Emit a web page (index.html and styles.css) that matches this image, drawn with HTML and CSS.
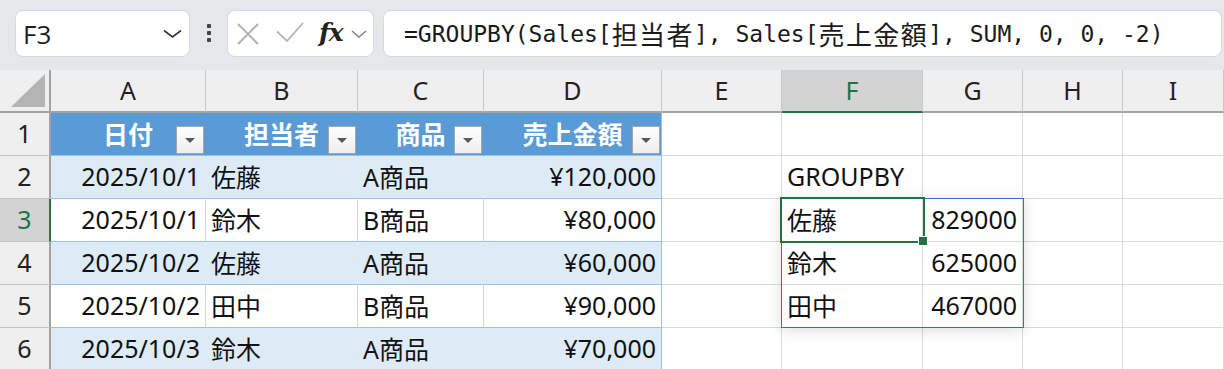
FILE: index.html
```html
<!DOCTYPE html>
<html lang="ja">
<head>
<meta charset="utf-8">
<title>GROUPBY</title>
<link rel="stylesheet" href="styles.css">
</head>
<body>
<div class="app">
  <div class="toolbar">
    <div class="namebox">
      <span class="name">F3</span>
      <svg class="chev" width="20" height="10" viewBox="0 0 20 10"><polyline points="1,1.5 9.5,8 18,1.5" fill="none" stroke="#333" stroke-width="1.6"/></svg>
    </div>
    <div class="dots">
      <svg width="8" height="20" viewBox="0 0 8 20"><rect x="2" y="1" width="4" height="4" rx="0.8" fill="#444"/><rect x="2" y="8" width="4" height="4" rx="0.8" fill="#444"/><rect x="2" y="15" width="4" height="4" rx="0.8" fill="#444"/></svg>
    </div>
    <div class="fxbox">
      <svg class="ic-x" width="22" height="22" viewBox="0 0 22 22"><path d="M1 1 L21 21 M21 1 L1 21" stroke="#b4b4b4" stroke-width="2" fill="none"/></svg>
      <svg class="ic-check" width="28" height="22" viewBox="0 0 28 22"><polyline points="1,9.5 11,19 27,1" fill="none" stroke="#b4b4b4" stroke-width="1.8"/></svg>
      <span class="fx">fx</span>
      <svg class="chev-s" width="16" height="8" viewBox="0 0 16 8"><polyline points="1,1 8,7 15,1" fill="none" stroke="#808080" stroke-width="1.4"/></svg>
    </div>
    <div class="formula">=GROUPBY(Sales[<span class="cjk">担当者</span>], Sales[<span class="cjk">売上金額</span>], SUM, 0, 0, -2)</div>
  </div>

  <div class="sheet">
    <div class="grid">
      <div class="ch corner"><svg width="36" height="35" viewBox="0 0 36 35"><polygon points="1,34 35,34 35,1" fill="#b4b4b4"/></svg></div>
      <div class="ch">A</div>
      <div class="ch">B</div>
      <div class="ch">C</div>
      <div class="ch">D</div>
      <div class="ch">E</div>
      <div class="ch sel">F</div>
      <div class="ch">G</div>
      <div class="ch">H</div>
      <div class="ch">I</div>

      <div class="rh">1</div>
      <div class="th"><span class="tt">日付</span><span class="fb"></span></div>
      <div class="th"><span class="tt">担当者</span><span class="fb"></span></div>
      <div class="th"><span class="tt">商品</span><span class="fb"></span></div>
      <div class="th last"><span class="tt">売上金額</span><span class="fb"></span></div>
      <div class="c"></div><div class="c"></div><div class="c"></div><div class="c"></div><div class="c"></div>

      <div class="rh">2</div>
      <div class="band r">2025/10/1</div>
      <div class="band l">佐藤</div>
      <div class="band l">A商品</div>
      <div class="band last r">¥120,000</div>
      <div class="c"></div><div class="c l">GROUPBY</div><div class="c"></div><div class="c"></div><div class="c"></div>

      <div class="rh sel">3</div>
      <div class="plain r">2025/10/1</div>
      <div class="plain l">鈴木</div>
      <div class="plain l">B商品</div>
      <div class="plain last r">¥80,000</div>
      <div class="c"></div><div class="c l">佐藤</div><div class="c r">829000</div><div class="c"></div><div class="c"></div>

      <div class="rh">4</div>
      <div class="band r">2025/10/2</div>
      <div class="band l">佐藤</div>
      <div class="band l">A商品</div>
      <div class="band last r">¥60,000</div>
      <div class="c"></div><div class="c l">鈴木</div><div class="c r">625000</div><div class="c"></div><div class="c"></div>

      <div class="rh">5</div>
      <div class="plain r">2025/10/2</div>
      <div class="plain l">田中</div>
      <div class="plain l">B商品</div>
      <div class="plain last r">¥90,000</div>
      <div class="c"></div><div class="c l">田中</div><div class="c r">467000</div><div class="c"></div><div class="c"></div>

      <div class="rh">6</div>
      <div class="band r">2025/10/3</div>
      <div class="band l">鈴木</div>
      <div class="band l">A商品</div>
      <div class="band last r">¥70,000</div>
      <div class="c"></div><div class="c"></div><div class="c"></div><div class="c"></div><div class="c"></div>
    </div>
    <div class="spill"></div>
    <div class="active"><span class="handle"></span></div>
  </div>
</div>
</body>
</html>
```

FILE: styles.css
```css
* { box-sizing: border-box; }
html, body { margin: 0; padding: 0; }
body {
  width: 1224px;
  height: 369px;
  overflow: hidden;
  background: #ffffff;
}
.app { width: 1224px; }

/* ---------- toolbar ---------- */
.toolbar {
  height: 70px;
  background: #e6e7ea;
  display: flex;
  align-items: flex-start;
  padding: 10px 0 0 15px;
}
.namebox, .fxbox, .formula {
  height: 47px;
  background: #ffffff;
  border: 1px solid #d8d9dc;
  border-radius: 8px;
}
.namebox {
  width: 175px;
  display: flex;
  align-items: center;
  justify-content: space-between;
  padding: 0 6px 0 7px;
}
.name {
  font-family: "Open Sans", "Noto Sans", sans-serif;
  font-weight: 400;
  font-size: 26px;
  color: #1e1e1e;
}
.chev { margin-top: 1px; }
.dots {
  width: 37px;
  height: 47px;
  display: flex;
  align-items: center;
  justify-content: center;
  padding-bottom: 1px;
}
.fxbox {
  width: 147px;
  display: flex;
  align-items: center;
  padding: 0 0 0 9px;
}
.ic-x { margin-right: 17px; }
.ic-check { margin-right: 15px; margin-top: -1px; }
.fx {
  font-family: "DejaVu Serif", "Liberation Serif", serif;
  font-style: italic;
  font-weight: bold;
  font-size: 25px;
  color: #222;
  margin-right: 8px;
  margin-top: -2px;
  letter-spacing: -1px;
}
.formula {
  margin-left: 9px;
  width: 839px;
  display: flex;
  align-items: center;
  padding-left: 20px;
  font-family: "DejaVu Sans Mono", "Liberation Mono", "Noto Sans CJK JP", monospace;
  font-size: 23px;
  color: #1a1a1a;
  white-space: pre;
}
.cjk {
  font-family: "Noto Sans CJK JP", sans-serif;
  font-size: 26px;
  letter-spacing: 1.4px;
}

/* ---------- sheet ---------- */
.sheet {
  position: relative;
  height: 299px;
  overflow: hidden;
}
.grid {
  display: grid;
  grid-template-columns: 51px 155px 152px 126px 178px 120px 141px 100px 100px 101px;
  grid-template-rows: repeat(7, 43px);
  font-family: "Noto Sans", "Noto Sans CJK JP", sans-serif;
  font-size: 25px;
  color: #111;
}
.grid > div {
  display: flex;
  align-items: center;
  padding-bottom: 3px;
  border-right: 1px solid #dadada;
  border-bottom: 1px solid #dadada;
  white-space: nowrap;
  overflow: hidden;
}
.r { justify-content: flex-end; padding-right: 5px; }
.l { justify-content: flex-start; padding-left: 5px; }

.grid > .ch {
  background: #efefef;
  justify-content: center;
  border-right: 1px solid #c8c8c8;
  border-bottom: 2px solid #a3a3a3;
  color: #222;
  padding-bottom: 2px;
}
.grid > .ch.sel {
  background: #d3d3d3;
  color: #217346;
  border-bottom: 2px solid #217346;
}
.grid > .corner {
  border-right: 2px solid #a3a3a3;
  align-items: flex-end;
  justify-content: flex-end;
  padding: 0 3px 3px 0;
}
.corner svg { display: block; }

.grid > .rh {
  background: #efefef;
  justify-content: center;
  border-right: 2px solid #a3a3a3;
  border-bottom: 1px solid #c4c4c4;
  color: #222;
}
.grid > .rh.sel {
  background: #d3d3d3;
  color: #217346;
  border-right: 2px solid #217346;
}

/* table header */
.grid > .th {
  display: grid;
  grid-template-columns: 1fr auto 1fr;
  align-items: center;
  padding-bottom: 0;
  background: #5b9bd5;
  border-right: 1px solid #5b9bd5;
  border-bottom: 1px solid #9bc2e6;
  color: #ffffff;
  font-family: "Noto Sans CJK JP", "Noto Sans", sans-serif;
  font-weight: bold;
}
.tt { grid-column: 2; margin-bottom: 2px; }
.fb {
  grid-column: 3;
  justify-self: end;
  align-self: end;
  width: 28px;
  height: 28px;
  margin: 0 1px 1px 0;
  border: 1px solid #a6a6a6;
  background: linear-gradient(#ffffff, #eeeeee);
  position: relative;
}
.fb::after {
  content: "";
  position: absolute;
  left: 8px;
  top: 11px;
  border-left: 5.5px solid transparent;
  border-right: 5.5px solid transparent;
  border-top: 5px solid #5a5a5a;
}

.grid > .band {
  background: #ddebf7;
  border-right: 1px solid #ddebf7;
  border-bottom: 1px solid #9bc2e6;
}
.grid > .plain {
  background: #ffffff;
  border-right: 1px solid #d4d4d4;
  border-bottom: 1px solid #9bc2e6;
}
.grid > .last { border-right: 1px solid #9bc2e6; }

/* overlays */
.spill {
  position: absolute;
  left: 781px;
  top: 128px;
  width: 243px;
  height: 130px;
  border: 1px solid #3d6cc4;
  box-shadow: 0 2px 14px rgba(0, 0, 0, 0.14);
}
.active {
  position: absolute;
  left: 780px;
  top: 127px;
  width: 145px;
  height: 46px;
  border: 2px solid #217346;
}
.handle {
  position: absolute;
  right: -4px;
  bottom: -4px;
  width: 8px;
  height: 8px;
  background: #217346;
  outline: 1px solid #ffffff;
}
```
